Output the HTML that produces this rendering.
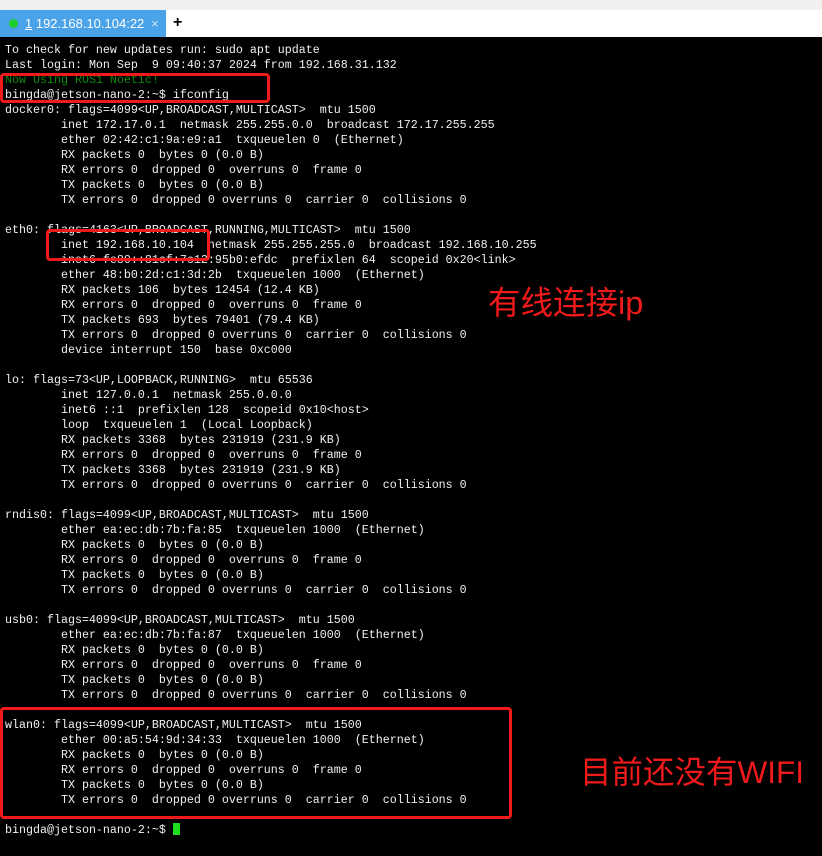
<!DOCTYPE html>
<html><head><meta charset="utf-8"><style>
body{margin:0;width:822px;height:856px;overflow:hidden;background:#000;position:relative;font-family:"Liberation Sans",sans-serif}
#top{position:absolute;left:0;top:0;width:822px;height:10px;background:#f0f0f0}
#bar{position:absolute;left:0;top:10px;width:822px;height:27px;background:#fff}
#tab{position:absolute;left:0;top:0;width:166px;height:27px;background:#4aa3e8;color:#fff;font-size:13px;line-height:27px}
#tab .d{position:absolute;left:9px;top:9px;width:9px;height:9px;border-radius:50%;background:#1fcc2c}
#tab .t{position:absolute;left:25px}
#tab .x{position:absolute;left:151px;color:#d0e4f4;font-size:13px}
#plus{position:absolute;left:173px;top:0;font-size:16px;line-height:26px;color:#000;font-weight:bold}
pre{position:absolute;left:5px;top:43px;margin:0;font-family:"Liberation Mono",monospace;font-size:11.67px;line-height:15px;color:#f0f0f0}
.g{color:#0a8a0a}
.box{position:absolute;border:3px solid #f01a1a;border-radius:4px}
.cn{position:absolute;color:#f01a1a;font-family:"Liberation Sans","Noto Sans CJK SC",sans-serif;line-height:36px}
.cur{display:inline-block;width:7px;height:12px;background:#1fdc1f;vertical-align:-2px}
</style></head><body>
<div id="top"></div>
<div id="bar"><div id="tab"><span class="d"></span><span class="t"><u>1</u> 192.168.10.104:22</span><span class="x">×</span></div><div id="plus">+</div></div>
<pre>To check for new updates run: sudo apt update
Last login: Mon Sep  9 09:40:37 2024 from 192.168.31.132
<span class="g">Now Using ROS1 Noetic!</span>
bingda@jetson-nano-2:~$ ifconfig
docker0: flags=4099&lt;UP,BROADCAST,MULTICAST&gt;  mtu 1500
        inet 172.17.0.1  netmask 255.255.0.0  broadcast 172.17.255.255
        ether 02:42:c1:9a:e9:a1  txqueuelen 0  (Ethernet)
        RX packets 0  bytes 0 (0.0 B)
        RX errors 0  dropped 0  overruns 0  frame 0
        TX packets 0  bytes 0 (0.0 B)
        TX errors 0  dropped 0 overruns 0  carrier 0  collisions 0

eth0: flags=4163&lt;UP,BROADCAST,RUNNING,MULTICAST&gt;  mtu 1500
        inet 192.168.10.104  netmask 255.255.255.0  broadcast 192.168.10.255
        inet6 fe80::81cf:7c12:95b0:efdc  prefixlen 64  scopeid 0x20&lt;link&gt;
        ether 48:b0:2d:c1:3d:2b  txqueuelen 1000  (Ethernet)
        RX packets 106  bytes 12454 (12.4 KB)
        RX errors 0  dropped 0  overruns 0  frame 0
        TX packets 693  bytes 79401 (79.4 KB)
        TX errors 0  dropped 0 overruns 0  carrier 0  collisions 0
        device interrupt 150  base 0xc000

lo: flags=73&lt;UP,LOOPBACK,RUNNING&gt;  mtu 65536
        inet 127.0.0.1  netmask 255.0.0.0
        inet6 ::1  prefixlen 128  scopeid 0x10&lt;host&gt;
        loop  txqueuelen 1  (Local Loopback)
        RX packets 3368  bytes 231919 (231.9 KB)
        RX errors 0  dropped 0  overruns 0  frame 0
        TX packets 3368  bytes 231919 (231.9 KB)
        TX errors 0  dropped 0 overruns 0  carrier 0  collisions 0

rndis0: flags=4099&lt;UP,BROADCAST,MULTICAST&gt;  mtu 1500
        ether ea:ec:db:7b:fa:85  txqueuelen 1000  (Ethernet)
        RX packets 0  bytes 0 (0.0 B)
        RX errors 0  dropped 0  overruns 0  frame 0
        TX packets 0  bytes 0 (0.0 B)
        TX errors 0  dropped 0 overruns 0  carrier 0  collisions 0

usb0: flags=4099&lt;UP,BROADCAST,MULTICAST&gt;  mtu 1500
        ether ea:ec:db:7b:fa:87  txqueuelen 1000  (Ethernet)
        RX packets 0  bytes 0 (0.0 B)
        RX errors 0  dropped 0  overruns 0  frame 0
        TX packets 0  bytes 0 (0.0 B)
        TX errors 0  dropped 0 overruns 0  carrier 0  collisions 0

wlan0: flags=4099&lt;UP,BROADCAST,MULTICAST&gt;  mtu 1500
        ether 00:a5:54:9d:34:33  txqueuelen 1000  (Ethernet)
        RX packets 0  bytes 0 (0.0 B)
        RX errors 0  dropped 0  overruns 0  frame 0
        TX packets 0  bytes 0 (0.0 B)
        TX errors 0  dropped 0 overruns 0  carrier 0  collisions 0

bingda@jetson-nano-2:~$ <span class="cur"></span></pre>
<div class="box" style="left:0;top:73px;width:264px;height:24px"></div>
<div class="box" style="left:46px;top:229px;width:158px;height:26px"></div>
<div class="box" style="left:0;top:707px;width:506px;height:106px"></div>
<div class="cn" style="left:488px;top:285px;font-size:32.5px">有线连接ip</div>
<div class="cn" style="left:580px;top:754px;font-size:31.5px">目前还没有WIFI</div>
</body></html>
